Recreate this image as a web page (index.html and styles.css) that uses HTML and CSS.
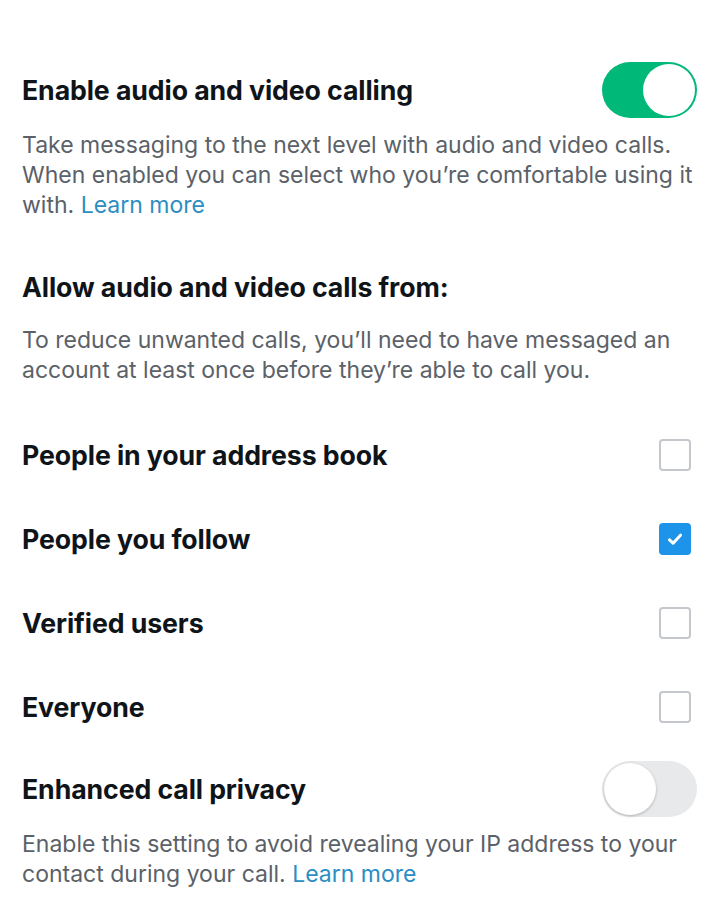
FILE: index.html
```html
<!DOCTYPE html>
<html lang="en">
<head>
<meta charset="utf-8">
<link rel="stylesheet" href="styles.css">
</head>
<body>
<main class="page">
  <div class="toggle-row first">
    <span class="title">Enable audio and video calling</span>
    <span class="switch on"><span class="knob"></span></span>
  </div>
  <p class="desc">Take messaging to the next level with audio and video calls. When enabled you can select who you’re comfortable using it with. <span class="link">Learn more</span></p>

  <h2 class="title heading">Allow audio and video calls from:</h2>
  <p class="desc">To reduce unwanted calls, you’ll need to have messaged an account at least once before they’re able to call you.</p>

  <div class="options">
    <div class="check-row"><span class="title">People in your address book</span><span class="box"></span></div>
    <div class="check-row"><span class="title">People you follow</span><span class="box checked"><svg viewBox="0 0 24 24" width="24" height="24"><path d="M6.5 12.8l3.6 3.4 7.4-8" fill="none" stroke="#fff" stroke-width="3" stroke-linecap="round" stroke-linejoin="round"/></svg></span></div>
    <div class="check-row"><span class="title">Verified users</span><span class="box"></span></div>
    <div class="check-row"><span class="title">Everyone</span><span class="box"></span></div>
  </div>

  <div class="toggle-row">
    <span class="title">Enhanced call privacy</span>
    <span class="switch off"><span class="knob"></span></span>
  </div>
  <p class="desc">Enable this setting to avoid revealing your IP address to your contact during your call. <span class="link">Learn more</span></p>
</main>
</body>
</html>
```
FILE: styles.css
```css
html, body {
  margin: 0;
  padding: 0;
  background: #fff;
}
.page {
  font-family: Inter, "Noto Sans", "Liberation Sans", sans-serif;
  padding: 62px 22px 0 22px;
  color: #0f1419;
}
.title {
  font-size: 26.7px;
  font-weight: 700;
  line-height: 30px;
  letter-spacing: -0.1px;
}
.heading {
  margin: 52px 0 0 0;
}
.desc {
  margin: 12px 0 0 0;
  font-size: 23px;
  line-height: 30px;
  color: #5b6168;
}
.heading + .desc {
  margin-top: 23px;
}
.link {
  color: #2a8ec4;
}
.toggle-row {
  display: flex;
  align-items: center;
  justify-content: space-between;
  height: 56px;
}
.options {
  margin-top: 28px;
  display: flex;
  flex-direction: column;
}
.check-row {
  display: flex;
  align-items: center;
  justify-content: space-between;
  height: 84px;
  padding-right: 7px;
}
.options + .toggle-row {
  margin-top: 12px;
}
.switch {
  width: 95px;
  height: 56px;
  border-radius: 28px;
  box-sizing: border-box;
  display: flex;
  align-items: center;
  padding: 2px;
  margin-right: 1px;
}
.switch.on {
  background: #00b877;
  justify-content: flex-end;
}
.switch.off {
  background: #e8e9ea;
  justify-content: flex-start;
}
.knob {
  width: 52px;
  height: 52px;
  border-radius: 50%;
  background: #fff;
  box-sizing: border-box;
}
.switch.off .knob {
  box-shadow: 0 1px 3px rgba(0,0,0,0.25);
}
.box {
  width: 32px;
  height: 32px;
  box-sizing: border-box;
  border: 2.5px solid #c4c8cc;
  border-radius: 4px;
  display: flex;
  align-items: center;
  justify-content: center;
}
.box.checked {
  background: #1d93ea;
  border-color: #1d93ea;
}
```
